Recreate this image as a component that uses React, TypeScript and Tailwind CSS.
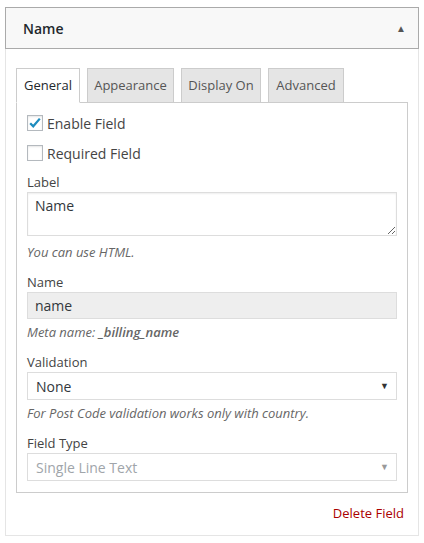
import { useState } from "react";

const font = { fontFamily: '"Open Sans", "Noto Sans", Arial, sans-serif' };

function Checkbox({ checked, label, onToggle }: { checked: boolean; label: string; onToggle: () => void }) {
  return (
    <label className="flex h-[30px] cursor-pointer items-center gap-[4px] text-[14px] text-[#444]">
      <span
        onClick={onToggle}
        className="flex h-[16px] w-[16px] items-center justify-center border border-[#b4b9be] bg-white shadow-[inset_0_1px_2px_rgba(0,0,0,0.1)]"
      >
        {checked && (
          <svg viewBox="0 0 16 16" className="h-[14px] w-[14px]">
            <path d="M2.5 8.2 L6 11.8 L13.5 3" fill="none" stroke="#1e8cbe" strokeWidth="2.6" />
          </svg>
        )}
      </span>
      {label}
    </label>
  );
}

const tabs = [
  { name: "General", w: "w-[64px]" },
  { name: "Appearance", w: "w-[87px]" },
  { name: "Display On", w: "w-[80px]" },
  { name: "Advanced", w: "w-[76px]" },
];

export default function App() {
  const [tab, setTab] = useState("General");
  const [enabled, setEnabled] = useState(true);
  const [required, setRequired] = useState(false);

  return (
    <div className="h-[543px] w-[424px] bg-white pl-[5px] pr-[5px] pt-[7px]" style={font}>
      <div className="w-[414px] border border-[#e5e5e5] bg-white">
        <div className="-mx-px -mt-px flex h-[42px] items-center justify-between border border-[#aaa] bg-[#f8f8f8] pl-[17px] pr-[12px]">
          <span className="text-[14px] font-semibold text-[#23282d]">Name</span>
          <span className="text-[10px] text-[#555]">▲</span>
        </div>

        <div className="px-[10px] pt-[19px]">
          <div className="flex gap-[7px]">
            {tabs.map((t) => (
              <button
                key={t.name}
                onClick={() => setTab(t.name)}
                className={`-mb-px h-[35px] ${t.w} border border-[#ccc] text-center text-[13px] ${
                  tab === t.name ? "border-b-white bg-white text-[#23282d]" : "bg-[#e5e5e5] text-[#555]"
                }`}
              >
                {t.name}
              </button>
            ))}
          </div>

          <div className="h-[391px] border border-[#ccc] px-[10px] pt-[5px]">
            <Checkbox checked={enabled} label="Enable Field" onToggle={() => setEnabled(!enabled)} />
            <Checkbox checked={required} label="Required Field" onToggle={() => setRequired(!required)} />

            <div className="mt-[4px] text-[13px] leading-[20px] text-[#444]">Label</div>
            <textarea
              defaultValue="Name"
              className="block h-[44px] w-full border border-[#ddd] px-[7px] py-[2px] text-[14px] text-[#32373c] shadow-[inset_0_1px_2px_rgba(0,0,0,0.07)] outline-none"
            />
            <p className="mt-[6px] text-[13px] italic leading-[20px] text-[#666]">You can use HTML.</p>

            <div className="mt-[10px] text-[13px] leading-[20px] text-[#444]">Name</div>
            <input
              readOnly
              value="name"
              className="block h-[27px] w-full border border-[#ddd] bg-[#eee] px-[7px] text-[14px] text-[#32373c] outline-none"
            />
            <p className="mt-[3px] text-[13px] italic leading-[20px] text-[#666]">
              Meta name: <b className="font-semibold">_billing_name</b>
            </p>

            <div className="mt-[10px] text-[13px] leading-[20px] text-[#444]">Validation</div>
            <div className="relative">
              <select className="block h-[28px] w-full appearance-none border border-[#ddd] bg-white px-[8px] text-[14px] text-[#32373c] outline-none">
                <option>None</option>
                <option>Post Code</option>
                <option>Phone</option>
                <option>Email</option>
              </select>
              <span className="pointer-events-none absolute right-[8px] top-[7px] text-[9px] text-[#333]">▼</span>
            </div>
            <p className="mt-[3px] text-[13px] italic leading-[20px] text-[#666]">
              For Post Code validation works only with country.
            </p>

            <div className="mt-[10px] text-[13px] leading-[20px] text-[#444]">Field Type</div>
            <div className="relative">
              <select
                disabled
                className="block h-[28px] w-full appearance-none border border-[#ddd] bg-white px-[8px] text-[14px] text-[#a0a5aa] outline-none"
              >
                <option>Single Line Text</option>
              </select>
              <span className="pointer-events-none absolute right-[8px] top-[7px] text-[9px] text-[#999]">▼</span>
            </div>
          </div>

          <div className="flex h-[42px] items-center justify-end pr-[4px]">
            <a href="#" className="text-[13px] text-[#a00]">
              Delete Field
            </a>
          </div>
        </div>
      </div>
    </div>
  );
}
